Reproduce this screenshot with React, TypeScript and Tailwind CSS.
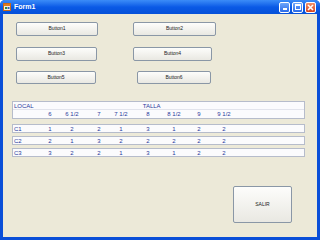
import React from "react";

const cols = ["6", "6 1/2", "7", "7 1/2", "8", "8 1/2", "9", "9 1/2"];
const rows = [
  { id: "C1", vals: ["1", "2", "2", "1", "3", "1", "2", "2"] },
  { id: "C2", vals: ["2", "1", "3", "2", "2", "2", "2", "2"] },
  { id: "C3", vals: ["3", "2", "2", "1", "3", "1", "2", "2"] },
];
// spacing before each size column so the values line up under the headers
const gaps = ["ml-0", "ml-[2px]", "ml-[7px]", "ml-[2px]", "ml-[7px]", "ml-[6px]", "ml-[5px]", "ml-[5px]"];

function XpButton({ label, className }: { label: string; className: string }) {
  return (
    <div
      className={`flex items-center justify-center rounded-[2px] border border-[#8a97a6] bg-gradient-to-b from-[#fdfdfb] to-[#e9e8e2] text-[5px] text-[#222] ${className}`}
    >
      {label}
    </div>
  );
}

function Cells({ label, vals }: { label: string; vals: string[] }) {
  return (
    <div className="flex items-center">
      <div className="w-[27px] pl-[1px]">{label}</div>
      {vals.map((v, i) => (
        <div key={i} className={`w-[20px] text-center ${gaps[i]}`}>
          {v}
        </div>
      ))}
    </div>
  );
}

function TitleButton({ kind }: { kind: "min" | "max" | "close" }) {
  const bg =
    kind === "close"
      ? "bg-gradient-to-b from-[#f0906a] to-[#d6421c]"
      : "bg-gradient-to-b from-[#6ea6fb] to-[#2a6ae8]";
  return (
    <div className={`flex h-[11px] w-[11px] items-center justify-center rounded-[2px] border border-white ${bg}`}>
      {kind === "min" && <div className="mt-[4px] h-[2px] w-[4px] bg-white" />}
      {kind === "max" && <div className="h-[6px] w-[6px] border border-white border-t-2" />}
      {kind === "close" && (
        <svg width="7" height="7" viewBox="0 0 7 7">
          <path d="M1 1L6 6M6 1L1 6" stroke="white" strokeWidth="1.6" />
        </svg>
      )}
    </div>
  );
}

export default function App() {
  return (
    <div className="flex h-[240px] w-[320px] flex-col rounded-t-[5px] bg-[#0a4fd8] font-['Liberation_Sans',Arial,sans-serif]">
      <div className="flex h-[14px] items-center rounded-t-[5px] bg-gradient-to-b from-[#3b8cf8] via-[#0a5ae6] to-[#0550d8] pl-[3px] pr-[4px]">
        <svg width="8" height="8" viewBox="0 0 8 8">
          <rect x="0.5" y="0.5" width="7" height="7" fill="#f3f0e0" stroke="#c86a18" />
          <rect x="1" y="1" width="6" height="2" fill="#e07a20" />
          <rect x="2" y="4" width="2" height="2" fill="#3a8a3a" />
          <rect x="4.5" y="4" width="2" height="2" fill="#3060c0" />
        </svg>
        <span className="ml-[3px] text-[7px] font-bold text-white">Form1</span>
        <div className="ml-auto flex gap-[2px]">
          <TitleButton kind="min" />
          <TitleButton kind="max" />
          <TitleButton kind="close" />
        </div>
      </div>

      <div className="mx-[3px] mb-[3px] flex-1 bg-[#ece9d8] pl-[9px] pt-[8px]">
        <div className="flex">
          <XpButton label="Button1" className="ml-[4px] h-[14px] w-[82px]" />
          <XpButton label="Button2" className="ml-[35px] h-[14px] w-[83px]" />
        </div>
        <div className="mt-[11px] flex">
          <XpButton label="Button3" className="ml-[4px] h-[14px] w-[81px]" />
          <XpButton label="Button4" className="ml-[36px] h-[14px] w-[79px]" />
        </div>
        <div className="mt-[10px] flex">
          <XpButton label="Button5" className="ml-[4px] h-[13px] w-[80px]" />
          <XpButton label="Button6" className="ml-[41px] h-[13px] w-[74px]" />
        </div>

        <div className="mt-[17px] w-[293px] text-[6px] leading-[8px] text-[#2a3a9c]">
          <div className="h-[18px] border border-[#b6bccb] bg-[#fbfbfd]">
            <div className="flex h-[8px] items-center border-b border-[#e2e4ec]">
              <span className="pl-[1px]">LOCAL</span>
              <span className="ml-[109px]">TALLA</span>
            </div>
            <Cells label="" vals={cols} />
          </div>
          {rows.map((r, i) => (
            <div
              key={r.id}
              className={`flex h-[9px] items-center border border-[#b6bccb] bg-[#fbfbfd] ${i === 0 ? "mt-[5px]" : "mt-[3px]"}`}
            >
              <Cells label={r.id} vals={r.vals} />
            </div>
          ))}
        </div>

        <XpButton label="SALIR" className="ml-[221px] mt-[29px] h-[37px] w-[59px]" />
      </div>
    </div>
  );
}
